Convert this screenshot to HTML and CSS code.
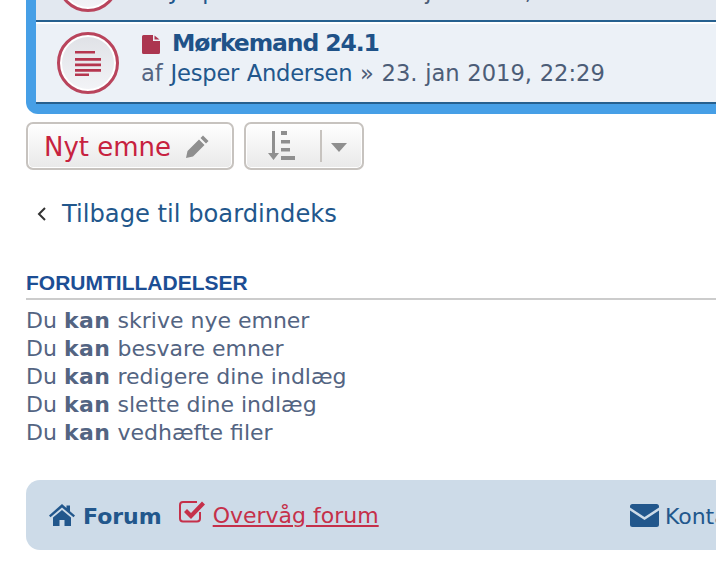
FILE: index.html
```html
<!DOCTYPE html>
<html lang="en">
<head>
    <meta charset="UTF-8">
    <meta name="viewport" content="width=device-width, initial-scale=1.0">
    <title>Forum</title>
    <link rel="stylesheet" href="styles.css">
</head>
<body>
    <div class="topic-box">
        <div class="topic-row alt">
            <div class="topic-icon">
                <svg width="28" height="26" viewBox="0 0 28 26"><path d="M1 1h20v2.400H1zM1 8h26v2.800H1zM1 13.500h26v2.800H1zM1 19h26v2.800H1zM1 23.500h14v2.400H1z" fill="#b5364f"/></svg>
            </div>
            <div class="topic-text">
                <div class="topic-title">Mørkemand 24.0</div>
                <div class="topic-meta"><span class="author-by">af</span> <a>Jesper Andersen</a> » 16. jan 2019, 21:09</div>
            </div>
        </div>
        <div class="topic-row">
            <div class="topic-icon">
                <svg width="28" height="26" viewBox="0 0 28 26"><path d="M1 1h20v2.400H1zM1 8h26v2.800H1zM1 13.500h26v2.800H1zM1 19h26v2.800H1zM1 23.500h14v2.400H1z" fill="#b5364f"/></svg>
            </div>
            <div class="topic-text">
                <div class="topic-title">
                    <svg class="file-icon" width="18" height="19" viewBox="0 0 18 19"><path d="M1.500 0H11v6h7v11.500a1.500 1.500 0 0 1-1.500 1.500h-15A1.500 1.500 0 0 1 0 17.500v-16A1.500 1.500 0 0 1 1.500 0zM12.500 0.500L17.500 4.500h-5z" fill="#ac3650"/></svg>
                    Mørkemand 24.1
                </div>
                <div class="topic-meta"><span class="author-by">af</span> <a>Jesper Andersen</a> » 23. jan 2019, 22:29</div>
            </div>
        </div>
    </div>

    <div class="action-bar">
        <button class="btn btn-new">
            <span class="btn-label">Nyt emne</span>
            <svg width="25" height="25" viewBox="0 0 25 25"><path d="M18 1.500l5.500 5.500-2.500 2.500-5.500-5.500zM14 5.500l5.500 5.500L8 22.500 1 24l1.500-7z" fill="#8f8f8f"/></svg>
        </button>
        <button class="btn btn-sort">
            <svg width="30" height="30" viewBox="0 0 30 30"><path d="M6 0h3v22h4l-5.500 7L2 22h4zM15 0h6v4h-6zM15 9h9v3.500h-9zM15 17h9v3.500h-9zM15 25h14v4H15z" fill="#8f8f8f"/></svg>
            <span class="btn-divider"></span>
            <span class="caret"></span>
        </button>
    </div>

    <div class="back-link">
        <svg width="12" height="16" viewBox="0 0 12 16"><path d="M9 2L3 8l6 6" fill="none" stroke="#333" stroke-width="2"/></svg>
        <a>Tilbage til boardindeks</a>
    </div>

    <h3 class="perm-title">FORUMTILLADELSER</h3>
    <div class="perm-list">
        Du <strong>kan</strong> skrive nye emner<br>
        Du <strong>kan</strong> besvare emner<br>
        Du <strong>kan</strong> redigere dine indlæg<br>
        Du <strong>kan</strong> slette dine indlæg<br>
        Du <strong>kan</strong> vedhæfte filer
    </div>

    <div class="footer-bar">
        <div class="footer-left">
            <svg width="26" height="22" viewBox="0 0 26 22"><path d="M13 0l4.500 4V1.500h3.500v5.800L26 11.500l-1.500 1.800L13 3.500 1.500 13.300 0 11.500zM13 6l9 7.500V22h-6.500v-6h-5v6H4v-8.500z" fill="#22578c"/></svg>
            <strong class="footer-home">Forum</strong>
            <svg class="watch-icon" width="26" height="22" viewBox="0 0 26 22"><path d="M21 11v6.500a3 3 0 0 1-3 3H4a3 3 0 0 1-3-3V4a3 3 0 0 1 3-3h14" fill="none" stroke="#c5304a" stroke-width="2"/><path d="M5 11l3-3 4 4L23 .5l3 3L12 18z" fill="#c5304a"/></svg>
            <a class="watch-link">Overvåg forum</a>
        </div>
        <div class="footer-right">
            <svg width="29" height="23" viewBox="0 0 29 23"><path d="M2.500 0h24A2.500 2.500 0 0 1 29 2.500V3.500L14.500 13 0 3.500v-1A2.500 2.500 0 0 1 2.500 0zM0 6.500l14.500 9.500L29 6.500v14a2.500 2.500 0 0 1-2.500 2.500h-24A2.500 2.500 0 0 1 0 20.500z" fill="#22578c"/></svg>
            <a class="contact-link">Kontakt os</a>
        </div>
    </div>
</body>
</html>
```

FILE: styles.css
```css
html, body {
    margin: 0;
    padding: 0;
    overflow: hidden;
    height: 564px;
    background-color: #fff;
}

body {
    width: 860px;
    padding-left: 26px;
    font-family: "DejaVu Sans", Verdana, sans-serif;
    font-size: 22px;
    color: #536482;
    box-sizing: border-box;
}

a {
    color: #22578c;
}

.topic-box {
    margin-top: -60px;
    background-color: #469fe6;
    padding: 0 0 10px 10px;
    border-radius: 0 0 0 12px;
}

.topic-row {
    display: flex;
    align-items: center;
    height: 78px;
    background-color: #ecf1f7;
    border-top: 2px solid #fff;
    border-bottom: 2px solid #26608f;
}

.topic-row.alt {
    background-color: #e2e8f0;
}

.topic-icon {
    width: 56px;
    height: 56px;
    margin-left: 21px;
    border: 3px solid #b9445c;
    border-radius: 50%;
    background: linear-gradient(#dfe1e6, #f3f4f7);
    box-shadow: inset 0 0 0 2px #fff;
    display: flex;
    align-items: center;
    justify-content: center;
    flex-shrink: 0;
}

.topic-text {
    margin-left: 22px;
    padding-bottom: 10px;
}

.topic-title {
    font-weight: bold;
    font-size: 23.500px;
    letter-spacing: -1.100px;
    line-height: 30px;
    color: #1f5288;
}

.file-icon {
    margin-left: 1px;
    margin-right: 5px;
    vertical-align: -3px;
}

.topic-meta {
    font-size: 22.600px;
    word-spacing: 0.500px;
    line-height: 30px;
    color: #4c5d77;
}

.topic-meta a {
    letter-spacing: -0.200px;
}

.author-by {
    color: #536482;
}

.action-bar {
    display: flex;
    gap: 10px;
    margin-top: 8px;
}

.btn {
    display: flex;
    align-items: center;
    height: 48px;
    padding: 0;
    font-family: inherit;
    border: 2px solid #c7c3bf;
    border-radius: 7px;
    background: linear-gradient(#fff, #e9e9e9);
    box-shadow: inset 0 0 0 1px #fff;
    box-sizing: border-box;
}

.btn-new {
    width: 208px;
    padding-left: 16px;
    gap: 14px;
    font-size: 26px;
    color: #c7223f;
}

.btn-label {
    padding-top: 2px;
}

.btn-sort {
    width: 120px;
    padding-left: 20px;
}

.btn-divider {
    width: 2px;
    height: 32px;
    margin-left: 24px;
    background-color: #c7c3bf;
}

.caret {
    margin-left: 9px;
    border-top: 9px solid #8f8f8f;
    border-left: 8px solid transparent;
    border-right: 8px solid transparent;
    margin-top: 3px;
}

.back-link {
    display: flex;
    align-items: center;
    gap: 14px;
    margin: 27px 0 0 10px;
    line-height: 34px;
    font-size: 24.200px;
}

.perm-title {
    margin: 38px 0 0;
    padding-bottom: 1px;
    font-family: "Liberation Sans", Arial, sans-serif;
    font-size: 21px;
    line-height: 28px;
    color: #1c4e94;
    border-bottom: 2px solid #ccc;
}

.perm-list {
    margin-top: 7px;
    line-height: 28px;
}

.perm-list strong {
    color: #536482;
    letter-spacing: 0.500px;
}

.footer-bar {
    display: flex;
    justify-content: space-between;
    align-items: center;
    width: 779px;
    height: 70px;
    margin-top: 33px;
    padding: 0 24px 0 23px;
    background-color: #cddbe8;
    border-radius: 14px;
    box-sizing: border-box;
}

.footer-left, .footer-right {
    display: flex;
    align-items: center;
}

.footer-home {
    margin-left: 8px;
    padding-top: 2px;
    color: #22578c;
}

.watch-icon {
    margin-left: 17px;
    margin-right: 8px;
    margin-top: -6px;
}

.watch-link {
    color: #c5304a;
    text-decoration: underline;
}

.footer-right {
    gap: 6px;
}

.contact-link {
    padding-top: 2px;
}
```
